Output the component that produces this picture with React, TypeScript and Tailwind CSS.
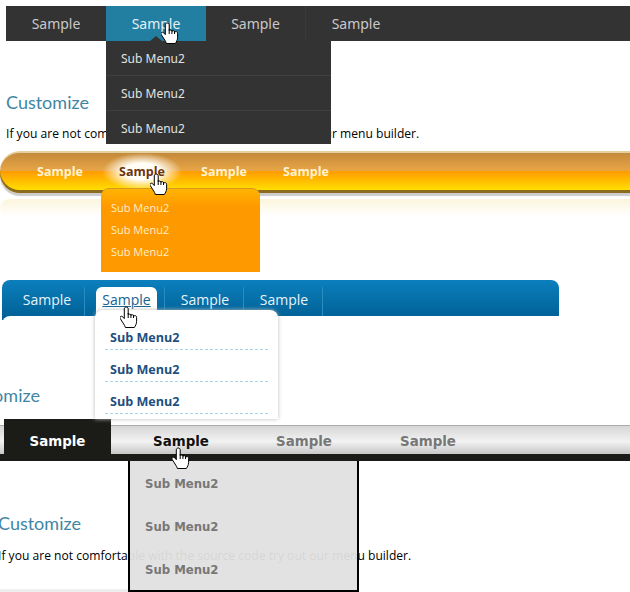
const items = ["Sample", "Sample", "Sample", "Sample"];
const subs = ["Sub Menu2", "Sub Menu2", "Sub Menu2"];
const copy = "If you are not comfortable with the source code try out our menu builder.";

function Hand({ className }: { className: string }) {
  return (
    <svg className={`absolute z-30 ${className}`} width="18" height="23" viewBox="0 0 18 23">
      <path
        d="M6.2 1C5 1 4.3 1.9 4.3 3v9.6L3 11.1c-.9-1-2-1.1-2.6-.5-.6.6-.5 1.5.1 2.4l3.2 5c.7 1.1 1.2 2 1.7 3.5h9c.9-1.7 2.2-3.4 2.2-6v-4.2c0-1-.7-1.7-1.5-1.7-.5 0-.9.2-1.2.5-.2-.9-.8-1.4-1.6-1.4-.5 0-1 .2-1.3.6-.3-.8-.9-1.2-1.6-1.2-.5 0-.9.1-1.2.4V3C8.2 1.9 7.4 1 6.2 1z"
        fill="#fff"
        stroke="#000"
        strokeWidth="1"
        strokeLinejoin="round"
      />
      <path d="M8.2 7v5M10.9 8v4M13.5 9v3" stroke="#000" strokeWidth="1" fill="none" />
    </svg>
  );
}

function DarkMenu() {
  return (
    <section className="relative h-[151px] pt-[6px] pl-[6px]">
      <nav className="flex h-[35px] bg-[#333333] text-[14px] text-[#c9c9c9] font-['Noto_Sans',sans-serif]">
        {items.map((label, i) => (
          <div
            key={i}
            className={`w-[100px] flex items-center justify-center ${i === 1 ? "bg-[#237fa1] text-[#e4f0f5]" : ""} ${i === 2 ? "border-r border-[#3a3a3a]" : ""}`}
          >
            {label}
          </div>
        ))}
      </nav>
      <h2 className="mt-[50px] text-[18px] leading-[22px] text-[#3f86a5] font-['Lato',sans-serif]">Customize</h2>
      <p className="mt-[13px] text-[12.1px] leading-[16px] text-black whitespace-nowrap font-['Open_Sans',sans-serif]">{copy}</p>
      <div className="absolute z-20 left-[106px] top-[41px] w-[225px] h-[103px] bg-[#333333] text-[12px] text-[#e2e2e2] font-['Noto_Sans',sans-serif]">
        <div className="absolute left-[44px] -top-[5px] w-0 h-0 border-x-[6px] border-x-transparent border-b-[5px] border-b-[#333333]" />
        {subs.map((label, i) => (
          <div key={i} className={`h-[35px] pl-[15px] flex items-center ${i < 2 ? "border-b border-[#404040] pt-[1px]" : ""}`}>
            {label}
          </div>
        ))}
      </div>
      <Hand className="left-[161px] top-[22px]" />
    </section>
  );
}

function OrangeMenu() {
  return (
    <section className="relative h-[129px]">
      <nav className="h-[42px] rounded-l-[20px] border-t-2 border-[#e6cf9f] bg-[linear-gradient(#c48a3c,#e8a544_45%,#ff9c00_46%,#ffde00_92%)] shadow-[inset_0_-3px_0_#8c6a1e,0_3px_1px_#cccccc] flex pl-[19px] text-[12.5px] font-bold text-[#fff3d2] font-['Open_Sans',sans-serif]">
        {items.map((label, i) => (
          <div key={i} className="relative w-[82px] h-[38px] flex items-center justify-center">
            {i === 1 && <div className="absolute left-[1px] top-0 w-[80px] h-[37px] rounded-full bg-[radial-gradient(closest-side,#fffdf5_45%,#fffdf500)]" />}
            <span className={`relative ${i === 1 ? "text-[#6b3410]" : ""}`}>{label}</span>
          </div>
        ))}
      </nav>
      <div className="mt-[6px] h-[18px] rounded-l-[20px] bg-[linear-gradient(#fcf5dc,#ffffff)]" />
      <div className="absolute z-20 left-[101px] top-[37px] w-[159px] h-[84px] rounded-t-[8px] border-t border-[#d99a20] bg-[linear-gradient(#ffb400,#ff9900_18px)] pt-[8px] text-[11px] text-[#ffeec6] font-['Open_Sans',sans-serif]">
        {subs.map((label, i) => (
          <div key={i} className="h-[22px] pl-[10px] flex items-center">
            {label}
          </div>
        ))}
      </div>
      <Hand className="left-[150px] top-[22px]" />
    </section>
  );
}

function BlueMenu() {
  return (
    <section className="relative h-[139px]">
      <div className="ml-[2px] w-[557px] h-[40px] rounded-t-[8px] bg-[linear-gradient(#0b7fbd,#005f93)]">
        <nav className="flex h-[36px] pt-[7px] pl-[5px] text-[14px] text-[#e9f4fa] font-['Open_Sans',sans-serif]">
          <div className="w-[78px] flex items-center justify-center pl-[3px] pb-[5px] border-r border-[#2a8cc0]">Sample</div>
          <div className="ml-[11px] w-[61px] rounded-t-[6px] bg-white text-[#17628f] flex items-center justify-center pb-[5px]">
            <span className="underline">Sample</span>
          </div>
          <div className="ml-[7px] w-[80px] flex items-center justify-center pl-[2px] pb-[5px] border-x border-[#2a8cc0]">Sample</div>
          <div className="w-[79px] flex items-center justify-center pl-[2px] pb-[5px] border-r border-[#2a8cc0]">Sample</div>
        </nav>
      </div>
      <div className="ml-[2px] -mt-[4px] h-[20px] bg-white rounded-tl-[8px]" />
      <h2 className="mt-[48px] -ml-[43px] text-[18px] leading-[22px] text-[#3f86a5] font-['Lato',sans-serif]">Customize</h2>
      <div className="absolute z-20 left-[95px] top-[30px] w-[183px] h-[109px] rounded-t-[8px] bg-white shadow-[0_0_4px_#bbbbbb] pt-[8px] px-[10px] text-[12.6px] font-bold text-[#1c4f80] font-['Open_Sans',sans-serif]">
        {subs.map((label, i) => (
          <div key={i} className="h-[32px] pt-[10px] pl-[5px] flex items-center border-b border-dashed border-[#a9d4e4]">
            {label}
          </div>
        ))}
      </div>
      <Hand className="left-[120px] top-[26px]" />
    </section>
  );
}

function GrayMenu() {
  return (
    <section className="relative h-[173px]">
      <div className="h-[42px] pt-[6px]">
        <div className="h-[36px] bg-[#1b1b18]">
          <div className="h-[29px] border-t border-[#aaaaaa] bg-[linear-gradient(#d6d6d6,#f2f2f2_55%,#c8c8c8)]" />
        </div>
      </div>
      <nav className="absolute inset-x-0 top-0 flex pl-[4px] h-[37px] text-[13.4px] font-bold text-[#777777] font-['DejaVu_Sans',sans-serif]">
        <div className="w-[107px] bg-[#1b1b18] text-white flex items-center justify-center pt-[9px]">Sample</div>
        <div className="w-[140px] text-[#111111] flex items-center justify-center pt-[9px]">Sample</div>
        <div className="w-[106px] flex items-center justify-center pt-[9px]">Sample</div>
        <div className="w-[142px] flex items-center justify-center pt-[9px]">Sample</div>
      </nav>
      <h2 className="mt-[51px] -ml-[2px] text-[18px] leading-[22px] text-[#3f86a5] font-['Lato',sans-serif]">Customize</h2>
      <p className="mt-[14px] -ml-[2px] text-[12.1px] leading-[16px] text-black whitespace-nowrap font-['Open_Sans',sans-serif]">{copy}</p>
      <div className="mt-[25px] w-[128px] h-[8px] bg-[#eeeeee]" />
      <div className="absolute z-20 left-[128px] top-[42px] w-[231px] h-[131px] border-x-2 border-b-2 border-black bg-[#e0e0e0]/95 pt-[2px] text-[11.7px] font-bold text-[#777777] font-['DejaVu_Sans',sans-serif]">
        {subs.map((label, i) => (
          <div key={i} className="h-[43px] pl-[15px] flex items-center">
            {label}
          </div>
        ))}
      </div>
      <Hand className="left-[172px] top-[28px]" />
    </section>
  );
}

export default function App() {
  return (
    <div className="w-[630px] h-[592px] overflow-hidden bg-white">
      <DarkMenu />
      <OrangeMenu />
      <BlueMenu />
      <GrayMenu />
    </div>
  );
}
